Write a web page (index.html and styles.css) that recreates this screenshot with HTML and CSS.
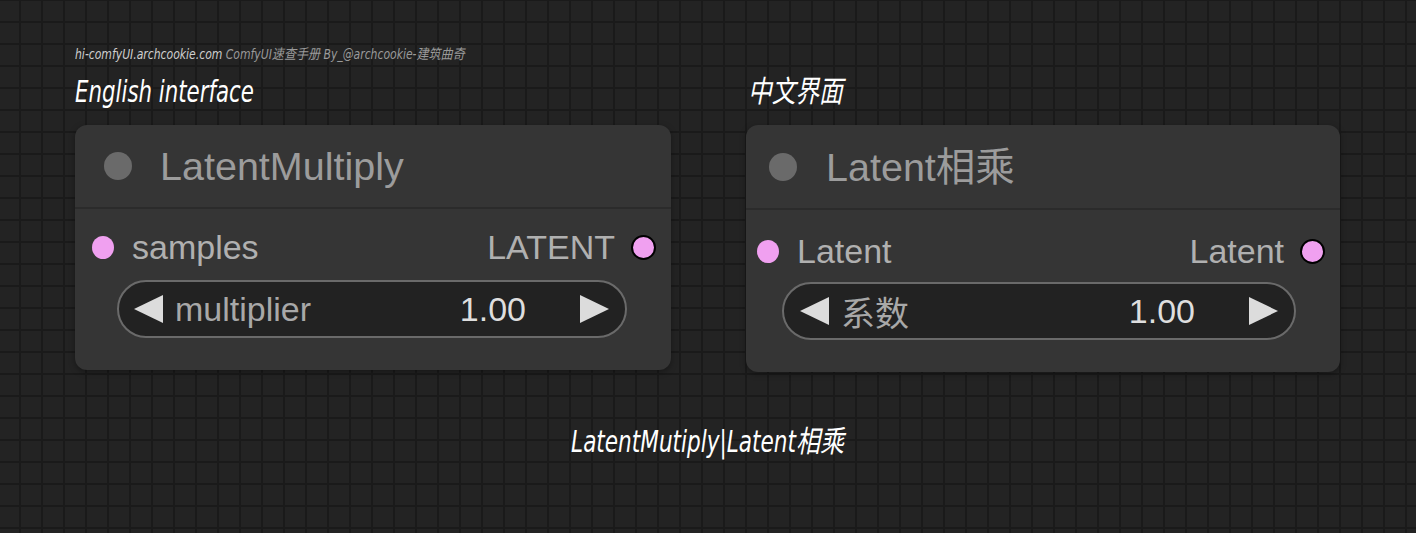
FILE: index.html
```html
<!DOCTYPE html>
<html lang="zh">
<head>
    <meta charset="UTF-8">
    <meta name="viewport" content="width=device-width, initial-scale=1.0">
    <title>LatentMultiply | Latent相乘</title>
    <link rel="stylesheet" href="styles.css">
</head>
<body>

    <div class="page">
        <p class="credit"><span class="squeeze"><span class="site">hi-comfyUI.archcookie.com</span> ComfyUI速查手册 By_@archcookie-建筑曲奇</span></p>

        <div class="columns">
            <!-- English node -->
            <div class="column col-en">
                <h2 class="label"><span class="squeeze">English interface</span></h2>
                <div class="node">
                    <div class="node-title">
                        <span class="title-dot"></span>
                        <span class="title-text">LatentMultiply</span>
                    </div>
                    <div class="node-body">
                        <div class="slot-row">
                            <span class="slot"><span class="dot"></span>samples</span>
                            <span class="slot">LATENT<span class="dot dot-out"></span></span>
                        </div>
                        <div class="widget">
                            <svg class="arrow" width="29" height="28" viewBox="0 0 29 28"><polygon points="0,14 29,0 29,28" fill="#dcdcdc"/></svg>
                            <span class="widget-label">multiplier</span>
                            <span class="widget-value">1.00</span>
                            <svg class="arrow" width="29" height="28" viewBox="0 0 29 28"><polygon points="29,14 0,0 0,28" fill="#dcdcdc"/></svg>
                        </div>
                    </div>
                </div>
            </div>

            <!-- 中文节点 -->
            <div class="column col-zh">
                <h2 class="label"><span class="squeeze">中文界面</span></h2>
                <div class="node">
                    <div class="node-title">
                        <span class="title-dot"></span>
                        <span class="title-text">Latent相乘</span>
                    </div>
                    <div class="node-body">
                        <div class="slot-row">
                            <span class="slot"><span class="dot"></span>Latent</span>
                            <span class="slot">Latent<span class="dot dot-out"></span></span>
                        </div>
                        <div class="widget">
                            <svg class="arrow" width="29" height="28" viewBox="0 0 29 28"><polygon points="0,14 29,0 29,28" fill="#dcdcdc"/></svg>
                            <span class="widget-label">系数</span>
                            <span class="widget-value">1.00</span>
                            <svg class="arrow" width="29" height="28" viewBox="0 0 29 28"><polygon points="29,14 0,0 0,28" fill="#dcdcdc"/></svg>
                        </div>
                    </div>
                </div>
            </div>
        </div>

        <p class="caption"><span class="squeeze">LatentMutiply|Latent相乘</span></p>
    </div>

</body>
</html>
```

FILE: styles.css
```css
body {
    margin: 0;
    background-color: #232323;
    background-image:
        linear-gradient(90deg, #1a1a1a 2px, transparent 2px),
        linear-gradient(#1a1a1a 2px, transparent 2px);
    background-size: 22px 22px;
    background-position: 19px -1px;
    font-family: "Liberation Sans", "Noto Sans CJK SC", sans-serif;
    color: #aaa;
    height: 533px;
    overflow: hidden;
}
.page {
    padding: 46px 0 0 75px;
}
.credit,
.label,
.caption {
    font-family: "DejaVu Sans Condensed", "Noto Sans CJK SC", sans-serif;
    font-style: italic;
    white-space: nowrap;
}
/* the reference uses a narrow italic face, squeeze the condensed one */
.squeeze {
    display: inline-block;
    transform: scaleX(0.79);
    transform-origin: left center;
}
.credit {
    margin: 0;
    font-size: 14px;
    line-height: 16px;
    color: #9a9a9a;
}
.credit .squeeze {
    transform: scaleX(0.86);
}
.credit .site {
    color: #cfcfcf;
}
.columns {
    display: flex;
    gap: 75px;
}
.col-en {
    width: 596px;
}
.col-zh {
    width: 594px;
}
.label {
    margin: 12px 0 15px 0;
    font-size: 30px;
    line-height: 36px;
    font-weight: normal;
    color: #fff;
}
.col-zh .label {
    margin-left: 2px;
}
.node {
    background-color: #353535;
    border-radius: 12px;
    box-shadow: 0 2px 6px rgba(0, 0, 0, 0.35);
}
.col-zh .node {
    margin-top: 1px;
}
.node-title {
    display: flex;
    align-items: center;
    height: 82px;
    padding-left: 29px;
    border-bottom: 2px solid #2b2b2b;
}
.col-zh .node-title {
    height: 83px;
    padding-left: 23px;
}
.title-dot {
    width: 28px;
    height: 28px;
    border-radius: 50%;
    background-color: #6a6a6a;
    margin-right: 28px;
    flex-shrink: 0;
}
.col-zh .title-dot {
    margin-right: 29px;
}
.title-text {
    font-size: 39.5px;
    line-height: 44px;
    color: #9c9c9c;
}
.node-body {
    padding: 18px 15px 32px 17px;
}
.col-zh .node-body {
    padding-top: 21px;
    padding-left: 11px;
    padding-bottom: 32px;
}
.slot-row {
    display: flex;
    justify-content: space-between;
    align-items: center;
    height: 40px;
    font-size: 34px;
    color: #b0b0b0;
}
.slot {
    display: flex;
    align-items: center;
}
.dot {
    width: 22px;
    height: 23px;
    border-radius: 50%;
    background-color: #f0a0f0;
    margin-right: 18px;
}
.dot-out {
    width: 21px;
    height: 21px;
    border: 2px solid #000;
    margin-right: 0;
    margin-left: 16px;
}
.widget {
    display: flex;
    align-items: center;
    height: 54px;
    margin: 13px 29px 0 25px;
    padding: 0 16px 0 15px;
    background-color: #222;
    border: 2px solid #6a6a6a;
    border-radius: 29px;
    font-size: 34px;
}
.col-zh .widget {
    margin-top: 11px;
    margin-left: 25px;
    margin-right: 29px;
    padding-left: 16px;
}
.widget-label {
    flex: 1;
    margin-left: 12px;
    color: #a8a8a8;
}
.widget-value {
    margin-right: 54px;
    color: #dedede;
}
.arrow {
    display: block;
    flex-shrink: 0;
}
.caption {
    margin: 52px 0 0 -75px;
    text-align: center;
    font-size: 30px;
    line-height: 36px;
    color: #fff;
}
.caption .squeeze {
    transform: scaleX(0.8);
    transform-origin: center center;
}
```
